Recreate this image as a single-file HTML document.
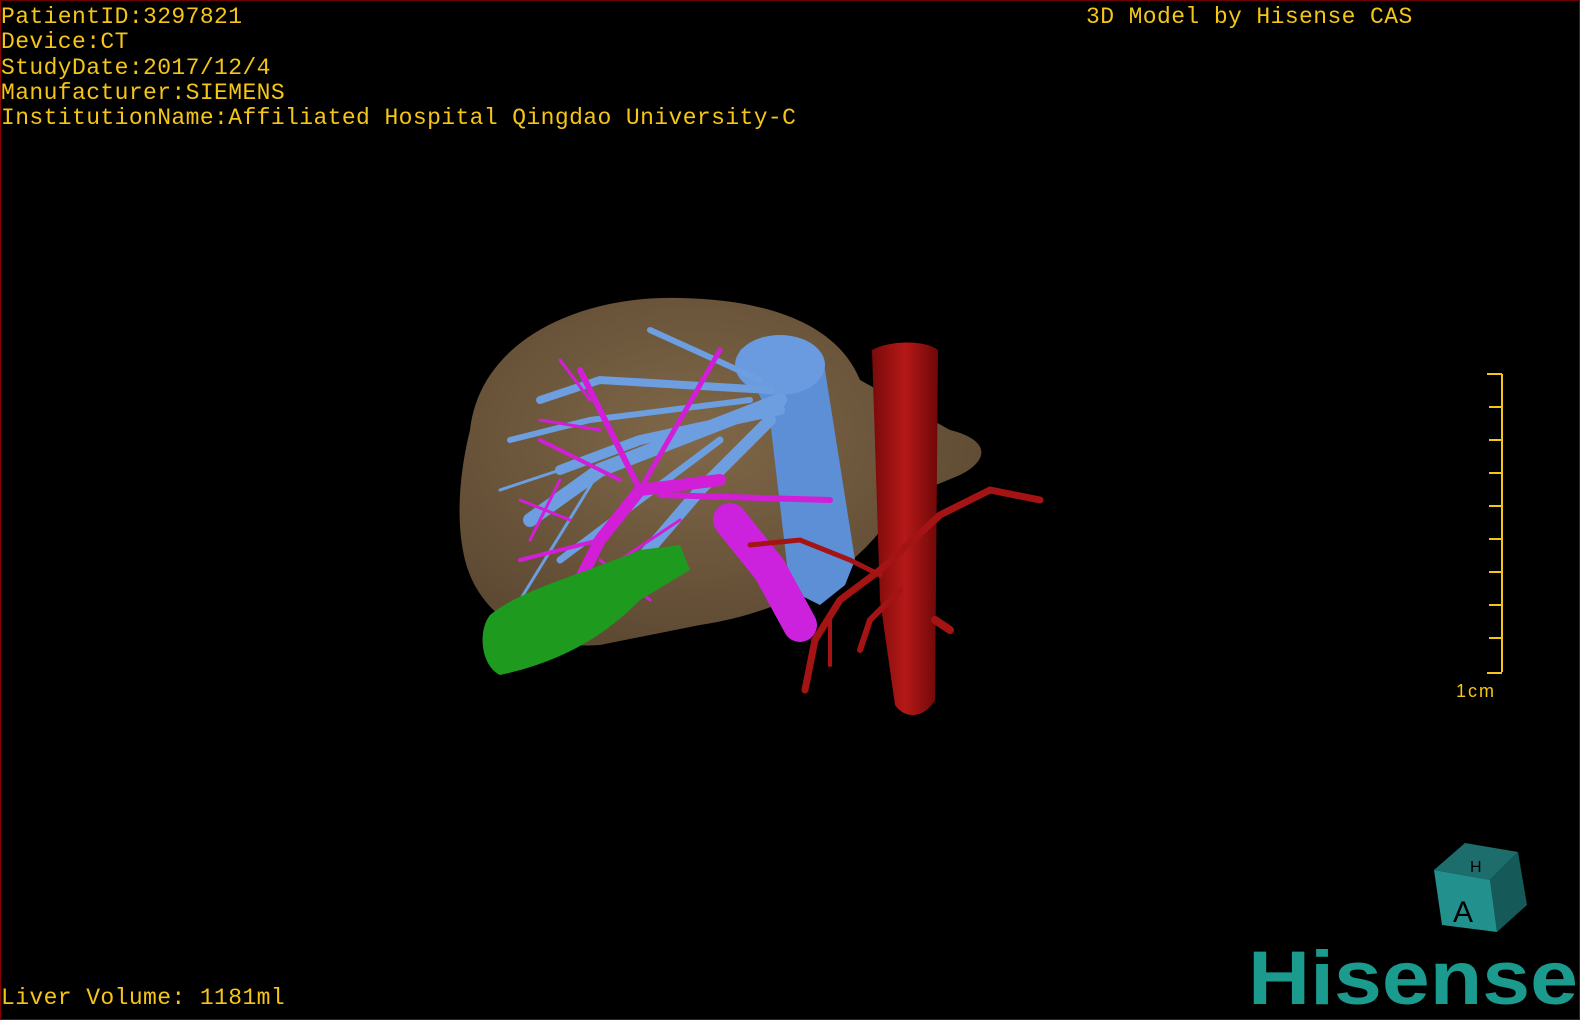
<!DOCTYPE html>
<html><head><meta charset="utf-8"><style>
html,body{margin:0;padding:0;background:#000;width:1580px;height:1020px;overflow:hidden}
.f{position:absolute;left:0;top:0;width:1578px;height:1018px;border:1px solid #8a0000;border-top-color:#6a0000}
.t{position:absolute;color:#f5c518;font-family:"Liberation Mono",monospace;font-size:23px;line-height:25.3px;white-space:pre;letter-spacing:0.4px}
</style></head><body>
<div class="f"></div>
<div class="t" style="left:1px;top:5px">PatientID:3297821
Device:CT
StudyDate:2017/12/4
Manufacturer:SIEMENS
InstitutionName:Affiliated Hospital Qingdao University-C</div>
<div class="t" style="left:1086px;top:5px">3D Model by Hisense CAS</div>
<div class="t" style="left:1px;top:986px">Liver Volume: 1181ml</div>
<svg width="1580" height="1020" style="position:absolute;left:0;top:0">
<defs>
<radialGradient id="lv" cx="0.45" cy="0.4" r="0.6"><stop offset="0" stop-color="#806848"/><stop offset="1" stop-color="#5e4a33"/></radialGradient>
<linearGradient id="ao" x1="0" x2="1"><stop offset="0" stop-color="#7a0a0a"/><stop offset="0.5" stop-color="#b51818"/><stop offset="1" stop-color="#6e0808"/></linearGradient>
</defs>
<path d="M470,430 C480,340 580,295 680,298 C780,300 840,330 860,380 L950,430 C990,440 990,460 960,475 L900,500 C870,560 800,610 700,625 L600,645 C540,650 480,620 465,560 C455,520 460,470 470,430 Z" fill="url(#lv)"/>
<path d="M740,350 C770,330 820,340 825,370 L855,560 L845,585 L820,605 L790,590 L770,420 Z" fill="#5d8fd6"/>
<ellipse cx="780" cy="365" rx="45" ry="30" fill="#6a9ae0"/>
<g stroke="#6c9ee0" stroke-linecap="round" fill="none">
<path d="M780,400 L600,470 L530,520" stroke-width="14"/>
<path d="M780,410 L640,440 L560,470" stroke-width="10"/>
<path d="M770,390 L600,380 L540,400" stroke-width="8"/>
<path d="M770,420 L700,490 L640,560" stroke-width="12"/>
<path d="M760,380 L650,330" stroke-width="6"/>
<path d="M750,400 L590,420 L510,440" stroke-width="6"/>
<path d="M720,440 L560,560" stroke-width="7"/>
<path d="M600,470 L520,600" stroke-width="3"/>
<path d="M560,470 L500,490" stroke-width="3"/>
</g>
<g stroke="#d21ed6" stroke-linecap="round" fill="none">
<path d="M730,520 L770,570 L800,625" stroke="#cc22dd" stroke-width="34"/>
<path d="M720,480 L640,490 L600,540 L570,600" stroke-width="12"/>
<path d="M640,490 L600,410 L580,370" stroke-width="6"/>
<path d="M640,490 L720,350" stroke-width="5"/>
<path d="M660,495 L830,500" stroke-width="6"/>
<path d="M600,540 L520,560" stroke-width="4"/>
<path d="M620,480 L540,440" stroke-width="4"/>
<path d="M590,400 L560,360" stroke-width="3"/>
<path d="M600,560 L650,600" stroke-width="3"/>
<path d="M560,480 L530,540" stroke-width="3"/>
<path d="M570,520 L520,500" stroke-width="3"/>
<path d="M610,590 L560,640" stroke-width="3"/>
<path d="M600,430 L540,420" stroke-width="3"/>
<path d="M680,520 L620,560" stroke-width="3"/>
</g>
<path d="M490,615 C520,590 580,575 640,550 L680,545 L690,570 L640,600 C610,630 570,660 500,675 C480,665 478,630 490,615 Z" fill="#1e9a1e"/>
<path d="M872,350 C890,340 925,340 938,350 L935,700 C925,718 905,720 895,705 L880,600 Z" fill="url(#ao)"/>
<g stroke="#a51414" stroke-linecap="round" fill="none">
<path d="M1040,500 L990,490 L940,515 L880,570 L840,600 L815,640 L805,690" stroke-width="7"/>
<path d="M880,575 L850,560 L800,540 L750,545" stroke-width="5"/>
<path d="M900,590 L870,620 L860,650" stroke-width="6"/>
<path d="M935,620 L950,630" stroke-width="8"/>
<path d="M830,620 L830,665" stroke-width="4"/>
</g>
<g stroke="#f5c518" stroke-width="2" fill="none">
<path d="M1502,374 V672 M1487,374 H1502 M1487,673 H1502"/>
<path d="M1489,407H1502M1489,440H1502M1489,473H1502M1489,506H1502M1489,539H1502M1489,572H1502M1489,605H1502M1489,638H1502"/>
</g>
<text x="1456" y="697" fill="#f5c518" font-family="Liberation Sans,sans-serif" font-size="18" letter-spacing="2">1cm</text>
<polygon points="1434,870 1465,843 1518,852 1490,880" fill="#1c6d6c"/>
<polygon points="1490,880 1518,852 1527,905 1497,932" fill="#155a58"/>
<polygon points="1434,870 1490,880 1497,932 1442,925" fill="#22908c"/>
<text x="1453" y="922" font-family="Liberation Sans,sans-serif" font-size="30" fill="#000">A</text>
<text x="1470" y="872" font-family="Liberation Sans,sans-serif" font-size="16" fill="#000">H</text>
<text x="1248" y="1004" font-family="Liberation Sans,sans-serif" font-weight="bold" font-size="76" fill="#1b9a8e" textLength="330" lengthAdjust="spacingAndGlyphs">Hisense</text>
</svg>
</body></html>
